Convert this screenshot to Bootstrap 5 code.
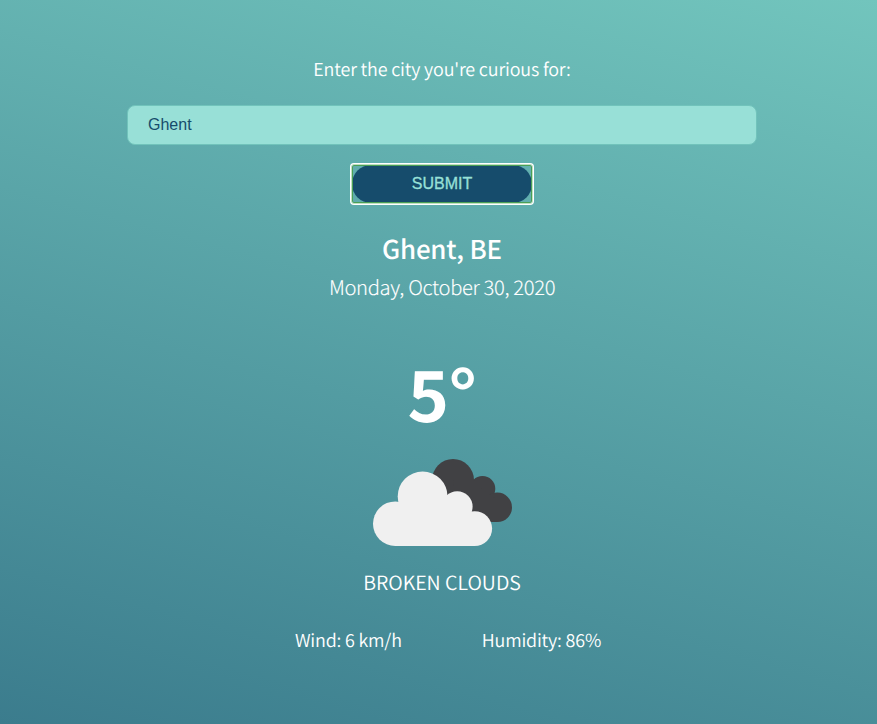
<!DOCTYPE html>
<html lang="en">
<head>
<meta charset="utf-8">
<meta name="viewport" content="width=device-width, initial-scale=1">
<title>Weather</title>
<link href="https://cdn.jsdelivr.net/npm/bootstrap@5.3.0/dist/css/bootstrap.min.css" rel="stylesheet">
<style>
html, body { height: 100%; }
body { font-family: "Noto Sans CJK SC", "Noto Sans", sans-serif; background: linear-gradient(195deg, #72c5bd 0%, #3b7c8d 100%) no-repeat; overflow: hidden; text-rendering: geometricPrecision; }
.weather { width: 630px; margin-left: 127px; padding-top: 54px; }
.city-label { font-size: 17.9px; line-height: 30px; font-weight: 350; letter-spacing: -.15px; }
.city-input, .city-input:focus { height: 40px; margin-top: 21px; padding: 0 20px; border: 1px solid #71c3bb; border-radius: 8px; background: #98e0d7; color: #164c6c; font: 16px/38px "Liberation Sans", Arial, sans-serif; box-shadow: none; }
.submit-ring { width: 184px; height: 42px; margin-top: 18px; border-radius: 4px; box-shadow: inset 0 0 0 1.5px #fff; padding: 2px; }
.submit-ring::after { content: ""; position: absolute; inset: 1px; border: 1px solid #fff; border-radius: 3px; box-shadow: inset 0 0 0 1px #4b9f56; pointer-events: none; border-color: #bfe0c2; }
.submit-btn, .submit-btn:hover { display: block; width: 180px; height: 38px; padding: 0; border: 0; border-radius: 19px; background: #164c6c; color: #98e0d7; font: 16px/38px "Liberation Sans", Arial, sans-serif; -webkit-text-stroke: .3px #98e0d7; }
.place { font-size: 25.9px; line-height: 36px; margin-top: 26px; font-weight: 500; letter-spacing: -.2px; }
.date { font-size: 20.2px; line-height: 30px; margin-top: 5px; font-weight: 300; letter-spacing: -.34px; -webkit-text-stroke: .1px #fff; }
.temp { font-size: 70.5px; line-height: 80px; margin-top: 50px; font-weight: 700; letter-spacing: -.5px; }
.cloud { display: block; margin-top: 27px; }
.conditions { font-size: 19.6px; line-height: 30px; margin-top: 20px; font-weight: 350; }
.details { font-size: 17.9px; line-height: 30px; margin-top: 28px; gap: 80px; padding-left: 12px; font-weight: 350; letter-spacing: -.16px; }
</style>
</head>
<body>
<main class="weather d-flex flex-column align-items-center text-white text-center">
  <label class="city-label" for="city">Enter the city you're curious for:</label>
  <input class="form-control city-input" id="city" type="text" value="Ghent">
  <div class="submit-ring position-relative"><button class="btn submit-btn" type="button">SUBMIT</button></div>
  <h1 class="place mb-0"><span>Ghent, BE</span></h1>
  <div class="date"><span>Monday, October 30, 2020</span></div>
  <div class="temp"><span>5°</span></div>
  <svg class="cloud" width="140" height="88" viewBox="372 459 140 88" aria-label="Broken clouds">
    <g fill="#414144">
      <circle cx="453" cy="480" r="21"/><circle cx="482.5" cy="488.8" r="12.8"/><circle cx="497.3" cy="507.3" r="14.7"/>
      <path d="M453 480H474L482 489L497 500V522H460Z"/>
    </g>
    <g fill="#f0f0f0">
      <circle cx="395.3" cy="523.7" r="22.3"/><circle cx="422.6" cy="496.4" r="24.9"/><circle cx="457.2" cy="506.6" r="15.4"/><circle cx="474.7" cy="528.6" r="17.4"/>
      <path d="M395 546V505L422 496L457 506L474.7 520V546Z"/>
    </g>
  </svg>
  <div class="conditions"><span>BROKEN CLOUDS</span></div>
  <div class="details d-flex justify-content-center"><span>Wind: 6 km/h</span><span>Humidity: 86%</span></div>
</main>
<script src="https://cdn.jsdelivr.net/npm/bootstrap@5.3.0/dist/js/bootstrap.bundle.min.js"></script>
</body>
</html>
